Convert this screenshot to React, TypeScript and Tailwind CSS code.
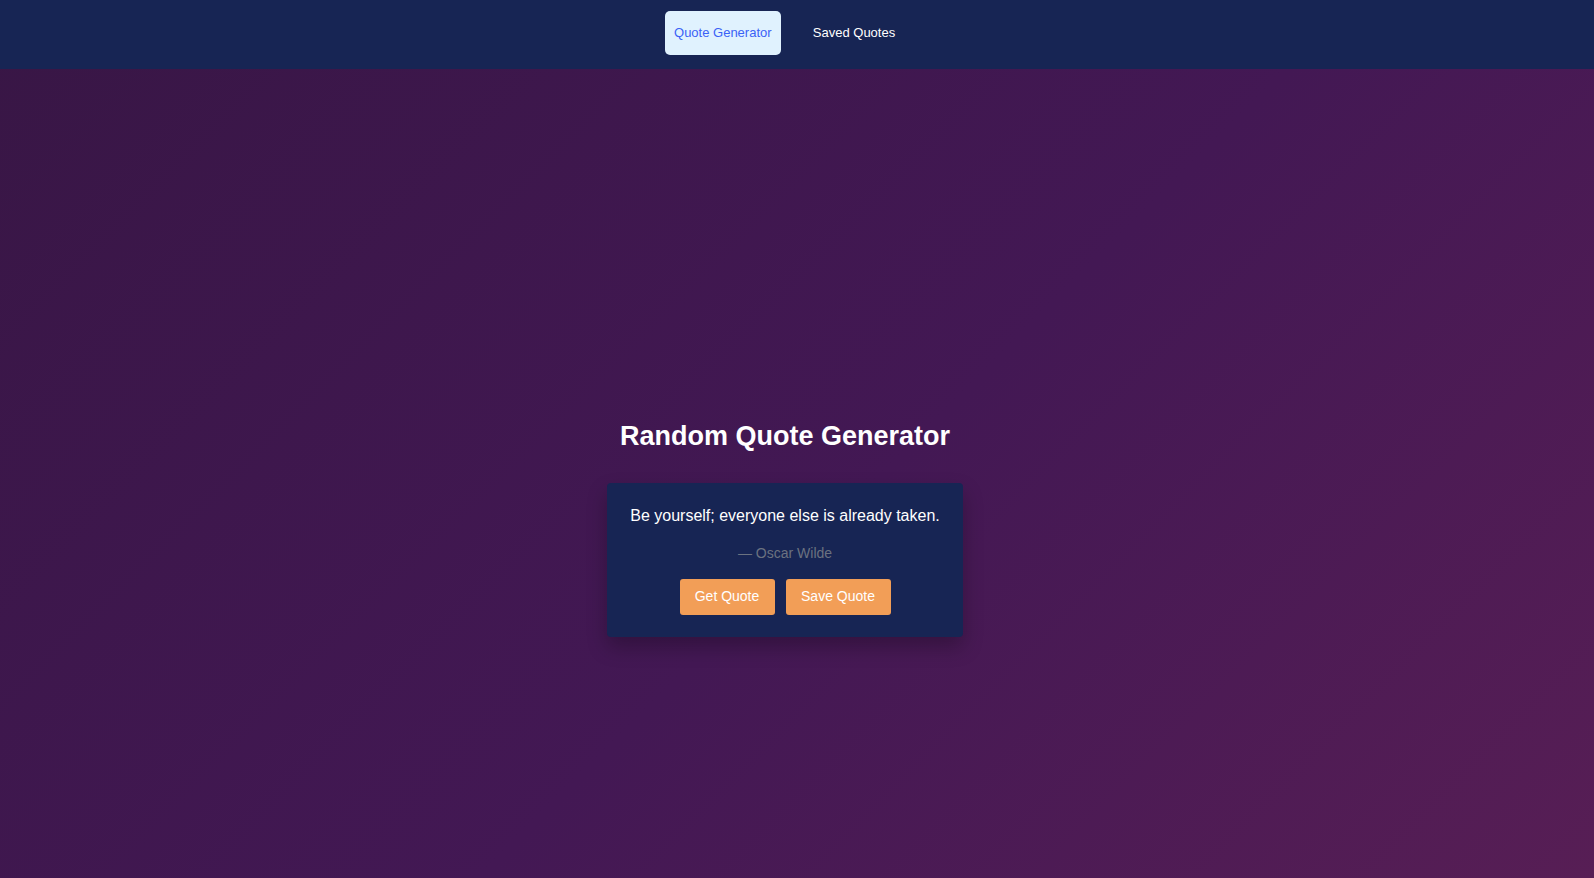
import React from "react";

export default function App() {
  return (
    <div className="min-h-screen flex flex-col font-['Liberation_Sans',Arial,sans-serif] bg-[linear-gradient(135deg,#381645_0%,#431854_55%,#571e55_100%)]">
      <nav className="h-[69px] bg-[#172554] flex items-start justify-center gap-[32px] pt-[11px] pr-[34px]">
        <button className="h-[44px] w-[116px] rounded-[5px] bg-[#e0f2fe] text-[#3b62f6] text-[13px]">Quote Generator</button>
        <button className="h-[44px] text-white text-[13px] font-medium">Saved Quotes</button>
      </nav>
      <main className="flex-1 flex flex-col items-center justify-center pt-[108px] pr-[24px]">
        <h1 className="text-white text-[27px] font-bold leading-[34px] mb-[30px]">Random Quote Generator</h1>
        <div className="w-[356px] h-[154px] bg-[#172554] rounded-[4px] shadow-[0_10px_20px_rgba(0,0,0,0.25)] flex flex-col items-center pt-[22px]">
          <p className="text-white text-[16px] leading-[22px]">Be yourself; everyone else is already taken.</p>
          <p className="text-[#6b7280] text-[14px] leading-[20px] mt-[16px]">— Oscar Wilde</p>
          <div className="flex gap-[11px] mt-[16px]">
            <button className="w-[95px] h-[36px] rounded-[3px] bg-[#f29e57] text-white text-[14px]">Get Quote</button>
            <button className="w-[105px] h-[36px] rounded-[3px] bg-[#f29e57] text-white text-[14px]">Save Quote</button>
          </div>
        </div>
      </main>
    </div>
  );
}
